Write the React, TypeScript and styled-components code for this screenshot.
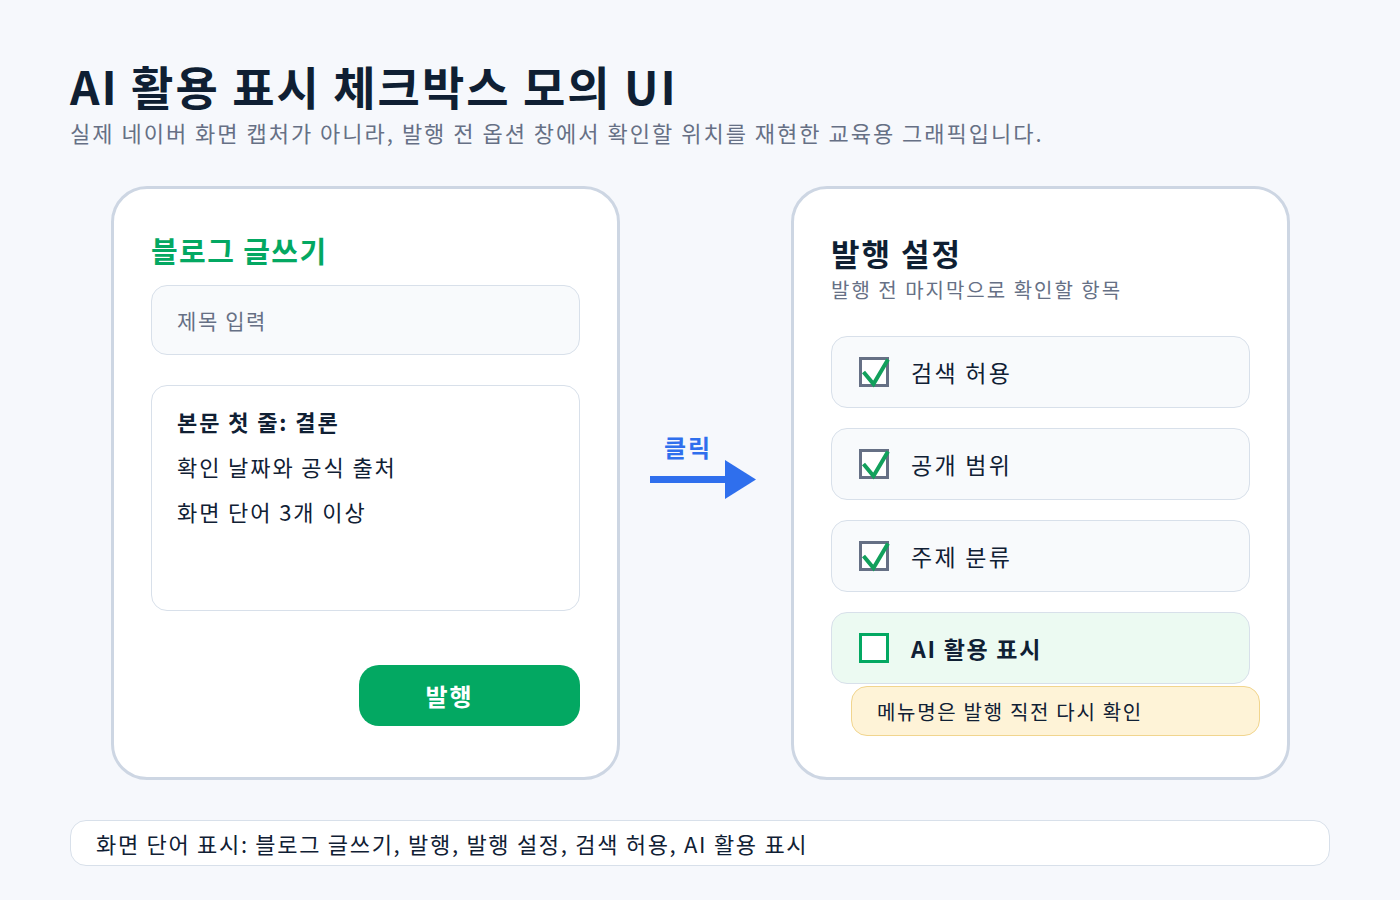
import React from "react";
import styled, { createGlobalStyle } from "styled-components";

const Global = createGlobalStyle`
  html, body { margin: 0; padding: 0; }
  body {
    background: #f6f8fc;
    font-family: "Noto Sans CJK KR", "Noto Sans", sans-serif;
    color: #102034;
  }
`;

const Page = styled.div`
  width: 1400px;
  height: 900px;
  box-sizing: border-box;
  padding: 54px 70px 0 70px;
  background: #f6f8fc;
`;

const Title = styled.h1`
  margin: 0;
  font-size: 46px;
  line-height: 62px;
  font-weight: 700;
  color: #0f1f33;
  letter-spacing: 2px;
`;

const Subtitle = styled.p`
  margin: 0;
  font-size: 22px;
  line-height: 32px;
  color: #667085;
  font-weight: 400;
  letter-spacing: 2px;
`;

const Main = styled.div`
  display: flex;
  align-items: flex-start;
  margin-top: 38px;
  margin-left: 41px;
`;

const Card = styled.div<{ $w: number; $pt: number }>`
  width: ${(p) => p.$w}px;
  height: 594px;
  box-sizing: border-box;
  background: #ffffff;
  border: 3px solid #cdd6e3;
  border-radius: 36px;
  padding: ${(p) => p.$pt}px 37px 0 37px;
  display: flex;
  flex-direction: column;
`;

const BlogTitle = styled.h2`
  margin: 0;
  font-size: 29px;
  line-height: 50px;
  font-weight: 700;
  color: #03a862;
  letter-spacing: 1.4px;
`;

const InputBox = styled.div`
  margin-top: 10px;
  height: 70px;
  box-sizing: border-box;
  border: 1px solid #d8e0ea;
  border-radius: 16px;
  background: #f8fafc;
  display: flex;
  align-items: center;
  padding-left: 25px;
  font-size: 21px;
  letter-spacing: 1.6px;
  color: #667085;
`;

const BodyBox = styled.div`
  margin-top: 30px;
  height: 226px;
  box-sizing: border-box;
  border: 1px solid #d8e0ea;
  border-radius: 16px;
  background: #ffffff;
  padding: 20px 25px;
  display: flex;
  flex-direction: column;
  gap: 15px;
`;

const BodyLine = styled.div<{ $bold?: boolean }>`
  font-size: 22px;
  line-height: 30px;
  letter-spacing: 1.9px;
  font-weight: ${(p) => (p.$bold ? 700 : 400)};
  color: #102034;
`;

const ButtonRow = styled.div`
  display: flex;
  justify-content: flex-end;
  margin-top: 54px;
`;

const PublishButton = styled.div`
  width: 221px;
  height: 61px;
  box-sizing: border-box;
  padding-right: 40px;
  border-radius: 20px;
  background: #03a862;
  color: #ffffff;
  font-size: 24px;
  letter-spacing: 2px;
  font-weight: 700;
  display: flex;
  align-items: center;
  justify-content: center;
`;

const ArrowArea = styled.div`
  width: 171px;
  height: 594px;
  display: flex;
  flex-direction: column;
  align-items: flex-start;
  padding-top: 247px;
  padding-left: 30px;
  box-sizing: border-box;
`;

const ClickLabel = styled.div`
  font-size: 24px;
  line-height: 28px;
  font-weight: 700;
  letter-spacing: 2px;
  color: #2f6fed;
  margin-left: 14px;
  margin-bottom: -3px;
`;

const SettingsTitle = styled.h2`
  margin: 0;
  font-size: 31px;
  line-height: 48px;
  font-weight: 700;
  letter-spacing: 2px;
  color: #0f1f33;
`;

const SettingsSub = styled.p`
  margin: 0;
  font-size: 20px;
  line-height: 26px;
  color: #667085;
  letter-spacing: 2px;
`;

const Rows = styled.div`
  display: flex;
  flex-direction: column;
  gap: 20px;
  margin-top: 33px;
`;

const Row = styled.div<{ $active?: boolean }>`
  height: 72px;
  box-sizing: border-box;
  border: 1px solid #d8e0ea;
  border-radius: 16px;
  background: ${(p) => (p.$active ? "#ecfaf2" : "#f8fafc")};
  display: flex;
  align-items: center;
  padding-left: 26px;
  gap: 20px;
`;

const RowLabel = styled.span<{ $bold?: boolean }>`
  font-size: 23px;
  letter-spacing: ${(p) => (p.$bold ? "1.7px" : "2.3px")};
  font-weight: ${(p) => (p.$bold ? 700 : 400)};
  color: #102034;
`;

const Note = styled.div`
  margin: 2px -10px 0 20px;
  height: 50px;
  box-sizing: border-box;
  border: 1px solid #f1d58e;
  border-radius: 16px;
  background: #fef3d7;
  display: flex;
  align-items: center;
  padding-left: 25px;
  font-size: 20px;
  letter-spacing: 1.7px;
  color: #102034;
`;

const Footer = styled.div`
  margin-top: 40px;
  height: 46px;
  box-sizing: border-box;
  border: 1px solid #d8e0ea;
  border-radius: 16px;
  background: #ffffff;
  display: flex;
  align-items: center;
  padding-left: 25px;
  font-size: 22px;
  color: #102034;
  letter-spacing: 1.7px;
`;

const Check = ({ checked }: { checked: boolean }) => (
  <svg width="33" height="33" viewBox="0 0 33 33" style={{ flexShrink: 0 }}>
    <rect
      x="2.5"
      y="2.5"
      width="27"
      height="27"
      fill="#ffffff"
      stroke={checked ? "#667085" : "#03a862"}
      strokeWidth="3"
    />
    {checked && (
      <polyline
        points="5.5,16 15.5,28 30,3.5"
        fill="none"
        stroke="#12a05c"
        strokeWidth="4"
      />
    )}
  </svg>
);

const Arrow = () => (
  <svg width="110" height="44" viewBox="0 0 110 44">
    <rect x="0" y="18" width="80" height="7" fill="#2f6fed" />
    <polygon points="75,2 106,21.5 75,41" fill="#2f6fed" />
  </svg>
);

export default function App() {
  return (
    <>
      <Global />
      <Page>
        <Title>AI 활용 표시 체크박스 모의 UI</Title>
        <Subtitle>
          실제 네이버 화면 캡처가 아니라, 발행 전 옵션 창에서 확인할 위치를 재현한 교육용 그래픽입니다.
        </Subtitle>
        <Main>
          <Card $w={509} $pt={36}>
            <BlogTitle>블로그 글쓰기</BlogTitle>
            <InputBox>제목 입력</InputBox>
            <BodyBox>
              <BodyLine $bold>본문 첫 줄: 결론</BodyLine>
              <BodyLine>확인 날짜와 공식 출처</BodyLine>
              <BodyLine>화면 단어 3개 이상</BodyLine>
            </BodyBox>
            <ButtonRow>
              <PublishButton>발행</PublishButton>
            </ButtonRow>
          </Card>
          <ArrowArea>
            <ClickLabel>클릭</ClickLabel>
            <Arrow />
          </ArrowArea>
          <Card $w={499} $pt={40}>
            <SettingsTitle>발행 설정</SettingsTitle>
            <SettingsSub>발행 전 마지막으로 확인할 항목</SettingsSub>
            <Rows>
              <Row>
                <Check checked />
                <RowLabel>검색 허용</RowLabel>
              </Row>
              <Row>
                <Check checked />
                <RowLabel>공개 범위</RowLabel>
              </Row>
              <Row>
                <Check checked />
                <RowLabel>주제 분류</RowLabel>
              </Row>
              <Row $active>
                <Check checked={false} />
                <RowLabel $bold>AI 활용 표시</RowLabel>
              </Row>
            </Rows>
            <Note>메뉴명은 발행 직전 다시 확인</Note>
          </Card>
        </Main>
        <Footer>화면 단어 표시: 블로그 글쓰기, 발행, 발행 설정, 검색 허용, AI 활용 표시</Footer>
      </Page>
    </>
  );
}
